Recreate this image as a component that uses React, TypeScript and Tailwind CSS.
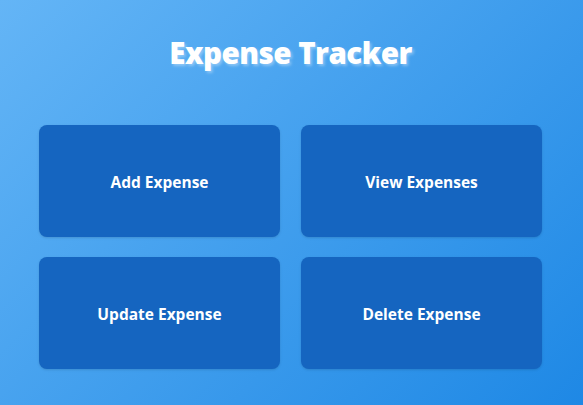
const actions = ["Add Expense", "View Expenses", "Update Expense", "Delete Expense"];

export default function App() {
  return (
    <div
      className="min-h-screen w-full bg-[linear-gradient(135deg,#64b5f6,#1e88e5)] pt-[31px] pr-[41px] pb-[36px] pl-[39px] text-white"
      style={{ fontFamily: '"Open Sans", "Noto Sans", sans-serif' }}
    >
      <h1 className="mb-[50px] text-center text-[29.5px] leading-[44px] font-extrabold tracking-[-0.5px] [text-shadow:2px_2px_3px_rgba(255,255,255,0.35)]">
        Expense Tracker
      </h1>
      <div className="grid grid-cols-2 gap-x-[21px] gap-y-[20px]">
        {actions.map((label) => (
          <button
            key={label}
            type="button"
            className="flex h-[112px] items-center justify-center rounded-lg bg-[#1565c0] pt-[3px] text-[15.5px] font-bold text-white shadow-sm"
          >
            {label}
          </button>
        ))}
      </div>
    </div>
  );
}
